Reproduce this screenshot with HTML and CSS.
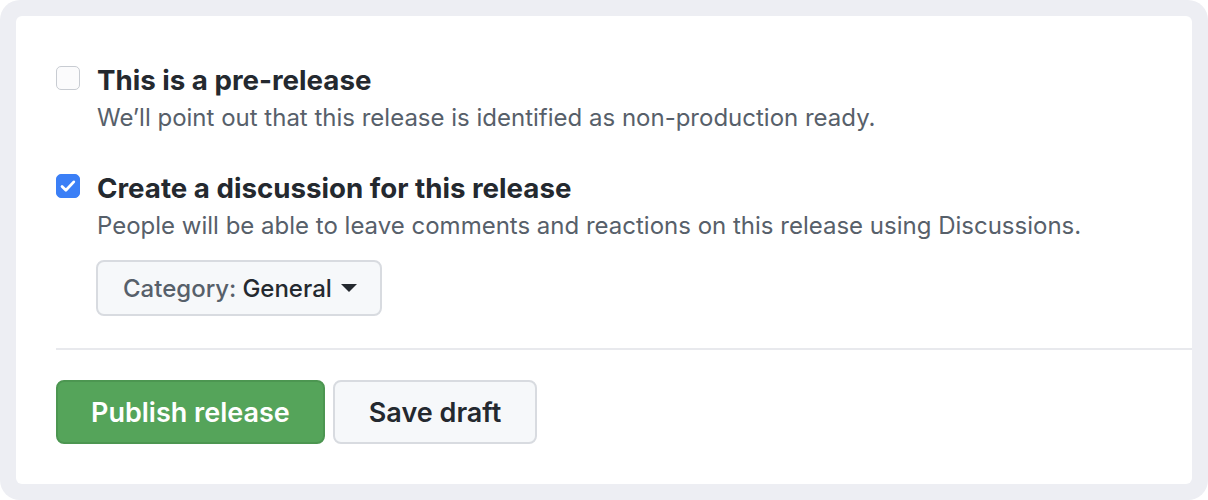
FILE: index.html
```html
<!DOCTYPE html>
<html lang="en-US">

<head>
    <meta charset="UTF-8">
    <meta name="viewport" content="width=device-width, initial-scale=1.0">
    <title>Publish release</title>
    <link rel="stylesheet" href="styles.css">
</head>

<body>
    <div class="frame">
        <div class="card">
            <div class="options">
                <div class="option">
                    <span class="check"></span>
                    <div class="option-body">
                        <div class="option-title">This is a pre-release</div>
                        <div class="option-note">We’ll point out that this release is identified as non-production ready.</div>
                    </div>
                </div>
                <div class="option">
                    <span class="check checked">
                        <svg viewBox="0 0 24 24" width="24" height="24">
                            <path d="M5.5 12.5l4.2 4.2 8.6-9.2" fill="none" stroke="#fff" stroke-width="3" stroke-linecap="round" stroke-linejoin="round" />
                        </svg>
                    </span>
                    <div class="option-body">
                        <div class="option-title">Create a discussion for this release</div>
                        <div class="option-note">People will be able to leave comments and reactions on this release using Discussions.</div>
                        <button class="select-button">
                            <span class="select-label">Category:</span> General
                            <span class="caret"></span>
                        </button>
                    </div>
                </div>
            </div>
            <div class="actions">
                <button class="btn btn-primary">Publish release</button>
                <button class="btn">Save draft</button>
            </div>
        </div>
    </div>
</body>

</html>
```

FILE: styles.css
```css
body {
    margin: 0;
    background: #fff;
    font-family: Inter, "Liberation Sans", sans-serif;
    color: #24292f;
}

.frame {
    height: 500px;
    box-sizing: border-box;
    padding: 16px;
    background: #edeef3;
    border-radius: 20px;
}

.card {
    height: 100%;
    background: #fff;
    border-radius: 6px;
    padding-left: 40px;
    display: flex;
    flex-direction: column;
}

.options {
    padding-top: 46px;
    border-bottom: 2px solid #e8e9ed;
    padding-bottom: 32px;
}

.option {
    display: flex;
    gap: 17px;
    margin-bottom: 34px;
}

.option:last-child {
    margin-bottom: 0;
}

.check {
    flex: none;
    width: 22px;
    height: 22px;
    margin-top: 4px;
    border: 1px solid #c8ccd2;
    border-radius: 5px;
    background: #fbfbfc;
    display: flex;
}

.check.checked {
    background: #3b7ff6;
    border-color: #3b7ff6;
}

.check svg {
    width: 22px;
    height: 22px;
}

.option-title {
    font-size: 27.7px;
    font-weight: 700;
    line-height: 36px;
}

.option-note {
    font-size: 24px;
    line-height: 36px;
    margin-top: 2px;
    color: #57606a;
}

.select-button {
    margin-top: 16px;
    height: 56px;
    margin-left: -1px;
    padding: 0 23px 0 25px;
    border: 2px solid #d8dbe0;
    border-radius: 8px;
    background: #f6f8fa;
    font-family: inherit;
    font-size: 24px;
    font-weight: 500;
    color: #24292f;
    display: flex;
    align-items: center;
    gap: 6px;
}

.select-label {
    color: #57606a;
}

.caret {
    width: 0;
    height: 0;
    margin-left: 3px;
    border-left: 8px solid transparent;
    border-right: 8px solid transparent;
    border-top: 8px solid #24292f;
}

.actions {
    display: flex;
    gap: 8px;
    padding-top: 30px;
}

.btn {
    height: 64px;
    padding: 0 34px;
    border: 2px solid #d8dbe0;
    border-radius: 8px;
    background: #f6f8fa;
    font-family: inherit;
    font-size: 27px;
    font-weight: 600;
    color: #24292f;
}

.btn-primary {
    background: #55a45a;
    border-color: #4c9651;
    color: #fff;
    padding: 0 33px;
}
```
